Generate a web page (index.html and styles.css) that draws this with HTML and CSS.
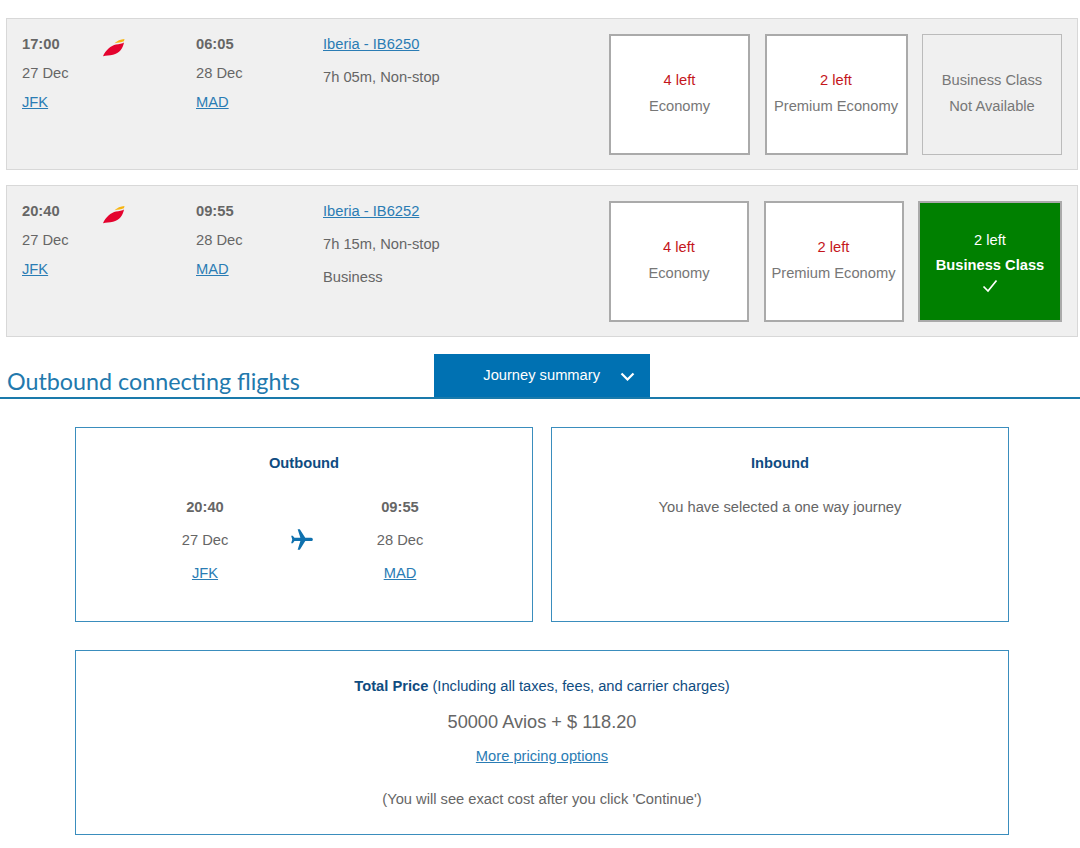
FILE: index.html

```html
<!DOCTYPE html>
<html lang="en">
<head>
  <meta charset="UTF-8" />
  <meta name="viewport" content="width=device-width, initial-scale=1.0" />
  <title>Select flights</title>
  <link rel="stylesheet" href="styles.css">
</head>
<body>
  <div class="flight-row">
    <div class="col col-dep">
      <p class="time">17:00</p>
      <p>27 Dec</p>
      <p><a href="#">JFK</a></p>
    </div>
    <div class="col col-logo">
      <svg class="logo" viewBox="0 0 22 18" width="22" height="18">
        <path fill="#e4032e" d="M0 17.2C2.5 11.5 8 6.5 13 5.6c3-.5 6.5-1.2 8-2.1C20 9 16.5 14.5 10 15.8c-3.5.7-7 1-10 1.4z"/>
        <path fill="#f7b512" d="M11.5 4.3C14 1.8 17.5.4 21.5 0l-.6 2.3c-2.9 1-6 1.5-9.4 2z"/>
      </svg>
    </div>
    <div class="col col-arr">
      <p class="time">06:05</p>
      <p>28 Dec</p>
      <p><a href="#">MAD</a></p>
    </div>
    <div class="col col-info">
      <p><a href="#">Iberia - IB6250</a></p>
      <p>7h 05m, Non-stop</p>
    </div>
    <div class="cards">
      <div class="card w141">
        <span class="left">4 left</span>
        <span>Economy</span>
      </div>
      <div class="card w143">
        <span class="left">2 left</span>
        <span>Premium Economy</span>
      </div>
      <div class="card card-off w140">
        <span>Business Class</span>
        <span>Not Available</span>
      </div>
    </div>
  </div>

  <div class="flight-row">
    <div class="col col-dep">
      <p class="time">20:40</p>
      <p>27 Dec</p>
      <p><a href="#">JFK</a></p>
    </div>
    <div class="col col-logo">
      <svg class="logo" viewBox="0 0 22 18" width="22" height="18">
        <path fill="#e4032e" d="M0 17.2C2.5 11.5 8 6.5 13 5.6c3-.5 6.5-1.2 8-2.1C20 9 16.5 14.5 10 15.8c-3.5.7-7 1-10 1.4z"/>
        <path fill="#f7b512" d="M11.5 4.3C14 1.8 17.5.4 21.5 0l-.6 2.3c-2.9 1-6 1.5-9.4 2z"/>
      </svg>
    </div>
    <div class="col col-arr">
      <p class="time">09:55</p>
      <p>28 Dec</p>
      <p><a href="#">MAD</a></p>
    </div>
    <div class="col col-info">
      <p><a href="#">Iberia - IB6252</a></p>
      <p>7h 15m, Non-stop</p>
      <p>Business</p>
    </div>
    <div class="cards">
      <div class="card w140">
        <span class="left">4 left</span>
        <span>Economy</span>
      </div>
      <div class="card w140">
        <span class="left">2 left</span>
        <span>Premium Economy</span>
      </div>
      <div class="card card-on w144">
        <span>2 left</span>
        <strong>Business Class</strong>
        <svg class="check" viewBox="0 0 16 14" width="16" height="14">
          <path d="M1.5 7.5l4.5 4.5 8.5-10.5" fill="none" stroke="#fff" stroke-width="1.7"/>
        </svg>
      </div>
    </div>
  </div>

  <div class="section-head">
    <h2>Outbound connecting flights</h2>
    <button class="tab">
      Journey summary
      <svg viewBox="0 0 15 9" width="15" height="9">
        <path d="M1.5 1.5l6 6 6-6" fill="none" stroke="#fff" stroke-width="2.2"/>
      </svg>
    </button>
  </div>

  <div class="summary">
    <div class="box">
      <h3>Outbound</h3>
      <div class="legs">
        <div class="leg">
          <p class="time">20:40</p>
          <p>27 Dec</p>
          <p><a href="#">JFK</a></p>
        </div>
        <svg class="plane" viewBox="0 0 24 24" width="26" height="26">
          <path fill="#0f71ae" transform="rotate(90 12 12)" d="M21 16v-2l-8-5V3.500c0-.83-.67-1.500-1.500-1.500S10 2.670 10 3.500V9l-8 5v2l8-2.500V19l-2 1.500V22l3.500-1 3.500 1v-1.500L13 19v-5.500l8 2.500z"/>
        </svg>
        <div class="leg">
          <p class="time">09:55</p>
          <p>28 Dec</p>
          <p><a href="#">MAD</a></p>
        </div>
      </div>
    </div>
    <div class="box">
      <h3>Inbound</h3>
      <p class="oneway">You have selected a one way journey</p>
    </div>
    <div class="box total">
      <p class="total-title"><strong>Total Price</strong> (Including all taxes, fees, and carrier charges)</p>
      <p class="price">50000 Avios + $ 118.20</p>
      <p class="more"><a href="#">More pricing options</a></p>
      <p class="note">(You will see exact cost after you click 'Continue')</p>
    </div>
  </div>
</body>
</html>
```

FILE: styles.css

```css
body {
  margin: 0;
  padding-top: 18px;
  font-family: "Liberation Sans", Arial, sans-serif;
  font-size: 14.7px;
  color: #666;
  background: white;
}
p {
  margin: 0;
}
a {
  color: #2a7cb4;
}
.flight-row {
  display: flex;
  height: 152px;
  box-sizing: border-box;
  margin: 0 2px 15px 6px;
  padding: 11px 15px 0 15px;
  background: #f0f0f0;
  border: 1px solid #d8d8d8;
}
.col p {
  line-height: 29px;
}
.col-dep {
  width: 81px;
}
.col-logo {
  width: 93px;
}
.col-arr {
  width: 127px;
}
.col-info {
  flex: 1;
}
.col-info p {
  line-height: 33px;
}
.col-info p:first-child {
  line-height: 29px;
  margin-bottom: 2px;
}
.time {
  font-weight: bold;
}
.logo {
  display: block;
  margin-top: 9px;
}
.cards {
  display: flex;
  gap: 14.5px;
  margin-top: 4px;
}
.card {
  height: 121px;
  box-sizing: border-box;
  display: flex;
  flex-direction: column;
  align-items: center;
  justify-content: center;
  gap: 8px;
  padding-bottom: 3px;
  line-height: 18px;
  background: white;
  border: 2px solid #aaa;
  color: #777;
  white-space: nowrap;
}
.w140 { width: 140px; }
.w141 { width: 141px; }
.w143 { width: 143px; }
.w144 { width: 144px; }
.left {
  color: #c4161c;
}
.card-off {
  background: #f0f0f0;
  border: 1px solid #bbb;
}
.card-on {
  background: #008000;
  color: white;
  gap: 7px;
  padding-bottom: 0;
}
.check {
  margin-top: -2px;
}
.section-head {
  display: flex;
  align-items: flex-end;
  margin-top: 17px;
  border-bottom: 2px solid #1a7aab;
}
.section-head h2 {
  width: 427px;
  margin: 0;
  padding: 0 0 1px 7px;
  font-family: Lato, sans-serif;
  font-size: 23.3px;
  font-weight: normal;
  line-height: 30px;
  color: #2279ad;
}
.tab {
  width: 216px;
  height: 43px;
  display: flex;
  align-items: center;
  justify-content: flex-end;
  gap: 20px;
  padding: 0 15px 1px 0;
  border: none;
  background: #0071b2;
  color: white;
  font-family: inherit;
  font-size: 14.7px;
}
.tab svg {
  margin-top: 3px;
}
.summary {
  display: grid;
  grid-template-columns: 458px 458px;
  grid-template-rows: 195px 185px;
  gap: 28px 18px;
  margin: 28px 71px 0 75px;
}
.box {
  box-sizing: border-box;
  border: 1px solid #3a8dbd;
  text-align: center;
  padding-top: 25px;
}
.box h3 {
  margin: 0;
  font-size: 14.7px;
  line-height: 20px;
  color: #0f4c81;
}
.legs {
  display: flex;
  align-items: center;
  margin-top: 18px;
  padding-left: 56px;
}
.leg {
  width: 146px;
}
.leg p {
  line-height: 33px;
}
.plane {
  flex: none;
  margin: 0 12px 2px 11px;
}
.oneway {
  margin-top: 24px;
  line-height: 20px;
}
.total {
  grid-column: 1 / 3;
}
.total-title {
  color: #0f4c81;
  line-height: 20px;
}
.price {
  margin-top: 16px;
  font-size: 18.2px;
  line-height: 20px;
}
.more {
  margin-top: 14px;
  line-height: 20px;
}
.note {
  margin-top: 23px;
  line-height: 20px;
}
```
